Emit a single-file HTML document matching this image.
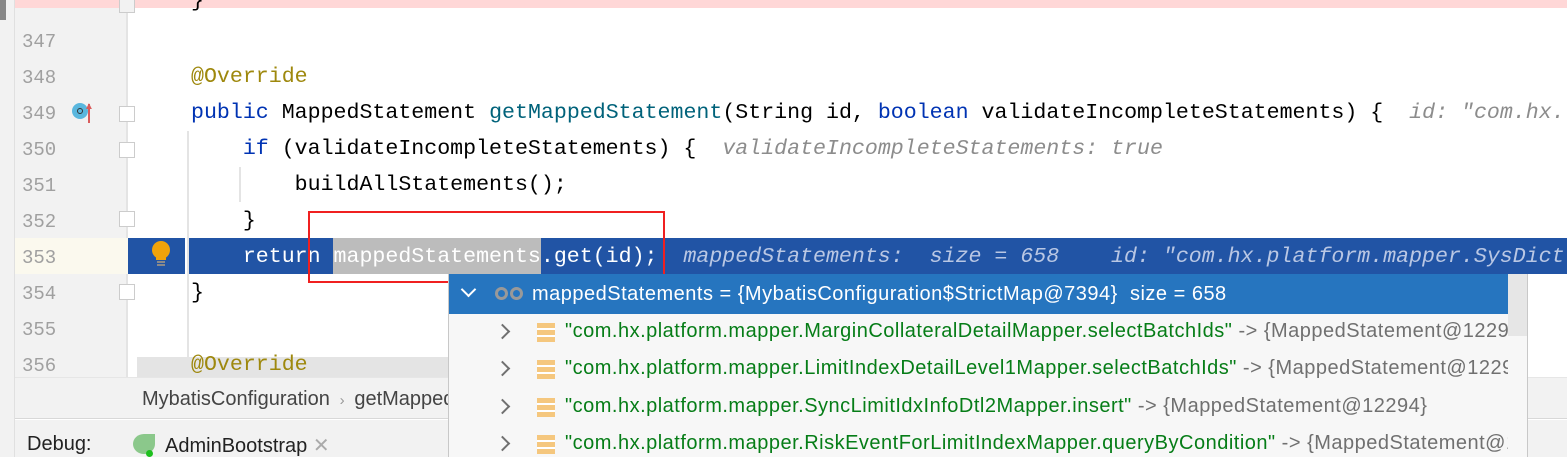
<!DOCTYPE html>
<html><head><meta charset="utf-8"><style>
*{margin:0;padding:0;box-sizing:border-box}
body{width:1567px;height:457px;overflow:hidden;background:#fff;position:relative;font-family:"Liberation Sans",sans-serif}
.abs{position:absolute}
.mono{font-family:"Liberation Mono",monospace;font-size:21.6px;white-space:pre}
.ln{position:absolute;left:22px;width:60px;color:#a0a0a0;font-family:"Liberation Mono",monospace;font-size:19px}
.code{position:absolute;left:191px}
.kw{color:#0033b3}.an{color:#9e880d}.hint{color:#8c8c8c;font-style:italic}
.row{position:absolute;left:0;height:37px;width:1060px;font-size:20px;letter-spacing:0.5px;white-space:nowrap;color:#1a1a1a}
.g{color:#067d17}.gr{color:#707070}
.chev{position:absolute;left:48px;top:12px;width:11px;height:11px;border-right:2px solid #707070;border-bottom:2px solid #707070;transform:rotate(-45deg)}
.ic{position:absolute;left:88px;top:9px;width:18px;height:19px;background:repeating-linear-gradient(#f5c77e 0 5px,#fff 5px 7px)}
</style></head><body>
<div class="abs" style="left:0;top:0;width:15px;height:457px;background:#f2f2f2;border-right:1px solid #e0e0e0"></div>
<div class="abs" style="left:0;top:0;width:6px;height:20px;background:#888"></div>
<div class="abs" style="left:15px;top:0;width:113px;height:377px;background:#f2f2f2"></div>
<div class="abs" style="left:126px;top:0;width:2px;height:377px;background:#e4e4e4"></div>
<div class="abs" style="left:15px;top:0;width:1552px;height:8px;background:#ffd7d7"></div>
<div class="abs" style="left:15px;top:238px;width:113px;height:36px;background:#fbf9ee"></div>
<div class="abs" style="left:128px;top:238px;width:1439px;height:36px;background:#2154a5"></div>
<div class="abs" style="left:185px;top:238px;width:2px;height:36px;background:#fff"></div>
<div class="abs" style="left:333px;top:238px;width:208px;height:36px;background:#bcbcbc"></div>
<div class="abs" style="left:152px;top:241px;width:18px;height:18px;border-radius:50%;background:#f0a30a"></div>
<div class="abs" style="left:156px;top:257px;width:10px;height:3px;background:#f0a30a"></div>
<div class="abs" style="left:157px;top:261px;width:8px;height:2px;background:#8a8a8a"></div>
<div class="abs" style="left:157px;top:264px;width:8px;height:2px;background:#8a8a8a"></div>
<div class="abs" style="left:187px;top:131px;width:2px;height:246px;background:#e4e4e4"></div>
<div class="abs" style="left:239px;top:167px;width:2px;height:35px;background:#e4e4e4"></div>
<div class="abs" style="left:72px;top:103px;width:16px;height:16px;border-radius:50%;background:#5ab7de"></div>
<div class="abs" style="left:77px;top:108px;width:6px;height:6px;border-radius:50%;border:1.5px solid #333"></div>
<div class="abs" style="left:88px;top:104px;width:2px;height:19px;background:#d95c5c"></div>
<div class="abs" style="left:84px;top:101px;color:#d95c5c;font-size:10px">▲</div>
<div class="abs" style="left:119px;top:0;width:16px;height:13px;border:1.5px solid #ccc;border-top:none;background:#f2f2f2"></div>
<div class="abs" style="left:119px;top:106px;width:16px;height:16px;border:1.5px solid #ccc;background:#fff"></div>
<div class="abs" style="left:119px;top:142px;width:16px;height:16px;border:1.5px solid #ccc;background:#fff"></div>
<div class="abs" style="left:119px;top:211px;width:16px;height:16px;border:1.5px solid #ccc;background:#fff"></div>
<div class="abs" style="left:119px;top:284px;width:16px;height:16px;border:1.5px solid #ccc;background:#fff"></div>
<div class="ln" style="top:31px">347</div>
<div class="ln" style="top:67px">348</div>
<div class="ln" style="top:103px">349</div>
<div class="ln" style="top:139px">350</div>
<div class="ln" style="top:175px">351</div>
<div class="ln" style="top:211px">352</div>
<div class="ln" style="top:247px">353</div>
<div class="ln" style="top:283px">354</div>
<div class="ln" style="top:319px">355</div>
<div class="ln" style="top:355px">356</div>
<div class="abs" style="left:137px;top:357px;width:320px;height:20px;background:#e4e4e4"></div>
<div class="mono code" style="top:-11px">}</div>
<div class="mono code an" style="top:65px">@Override</div>
<div class="mono code" style="top:101px"><span class="kw">public</span> MappedStatement <span style="color:#00627a">getMappedStatement</span>(String id, <span class="kw">boolean</span> validateIncompleteStatements) {  <span class="hint">id: "com.hx.</span></div>
<div class="mono code" style="top:137px">    <span class="kw">if</span> (validateIncompleteStatements) {  <span class="hint">validateIncompleteStatements: true</span></div>
<div class="mono code" style="top:173px">        buildAllStatements();</div>
<div class="mono code" style="top:209px">    }</div>
<div class="mono code" style="top:245px;color:#fff">    return mappedStatements.get(id);  <span class="hint" style="color:#b9c7e4">mappedStatements:  size = 658    id: "com.hx.platform.mapper.SysDict</span></div>
<div class="mono code" style="top:281px">}</div>
<div class="mono code an" style="top:353px">@Override</div>
<div class="abs" style="left:308px;top:211px;width:357px;height:72px;border:2px solid #f02020"></div>
<div class="abs" style="left:15px;top:377px;width:1552px;height:42px;background:#f2f2f2;border-top:1px solid #e6e6e6;border-bottom:1px solid #d8d8d8"></div>
<div class="abs" style="left:142px;top:388px;font-size:20px;color:#444">MybatisConfiguration <span style="color:#999;font-size:15px">&nbsp;›&nbsp;</span> getMappedStatement</div>
<div class="abs" style="left:15px;top:420px;width:1552px;height:37px;background:#f2f2f2"></div>
<div class="abs" style="left:27px;top:433px;font-size:20px;color:#222">Debug:</div>
<div class="abs" style="left:133px;top:434px;width:22px;height:20px;border-radius:50% 0 50% 50%;background:#8bc88b"></div>
<div class="abs" style="left:146px;top:450px;width:7px;height:7px;border-radius:50%;background:#1ec01e"></div>
<div class="abs" style="left:165px;top:433px;font-size:20px;color:#222">AdminBootstrap <span style="color:#aaa">✕</span></div>
<div class="abs" style="left:448px;top:274px;width:1080px;height:183px;background:#f7f7f7;border-left:1px solid #c8c8c8;border-right:1px solid #c8c8c8;overflow:hidden">
 <div class="row" style="top:0;height:40px;background:#2675bf;color:#fff">
  <div class="abs" style="left:14px;top:10px;width:11px;height:11px;border-right:2px solid #fff;border-bottom:2px solid #fff;transform:rotate(45deg)"></div>
  <div class="abs" style="left:46px;top:13px;width:13px;height:13px;border:3px solid #999;border-radius:50%"></div>
  <div class="abs" style="left:61px;top:13px;width:13px;height:13px;border:3px solid #999;border-radius:50%"></div>
  <span class="abs" style="left:83px;top:9px">mappedStatements = {MybatisConfiguration$StrictMap@7394}&nbsp; size = 658</span>
 </div>
 <div class="row" style="top:40px"><div class="chev"></div><div class="ic"></div><span class="abs" style="left:116px;top:6px"><span class="g">"com.hx.platform.mapper.MarginCollateralDetailMapper.selectBatchIds"</span> <span class="gr">-&gt; {MappedStatement@12290}</span></span></div>
 <div class="row" style="top:77px"><div class="chev"></div><div class="ic"></div><span class="abs" style="left:116px;top:6px"><span class="g">"com.hx.platform.mapper.LimitIndexDetailLevel1Mapper.selectBatchIds"</span> <span class="gr">-&gt; {MappedStatement@12292}</span></span></div>
 <div class="row" style="top:115px"><div class="chev"></div><div class="ic"></div><span class="abs" style="left:116px;top:6px"><span class="g">"com.hx.platform.mapper.SyncLimitIdxInfoDtl2Mapper.insert"</span> <span class="gr">-&gt; {MappedStatement@12294}</span></span></div>
 <div class="row" style="top:152px"><div class="chev"></div><div class="ic"></div><span class="abs" style="left:116px;top:6px"><span class="g">"com.hx.platform.mapper.RiskEventForLimitIndexMapper.queryByCondition"</span> <span class="gr">-&gt; {MappedStatement@12294}</span></span></div>
 <div class="abs" style="left:1059px;top:0;width:20px;height:183px;background:#f7f7f7"></div>
 <div class="abs" style="left:1059px;top:0;width:20px;height:62px;background:#e6e6e6"></div>
</div>
</body></html>
